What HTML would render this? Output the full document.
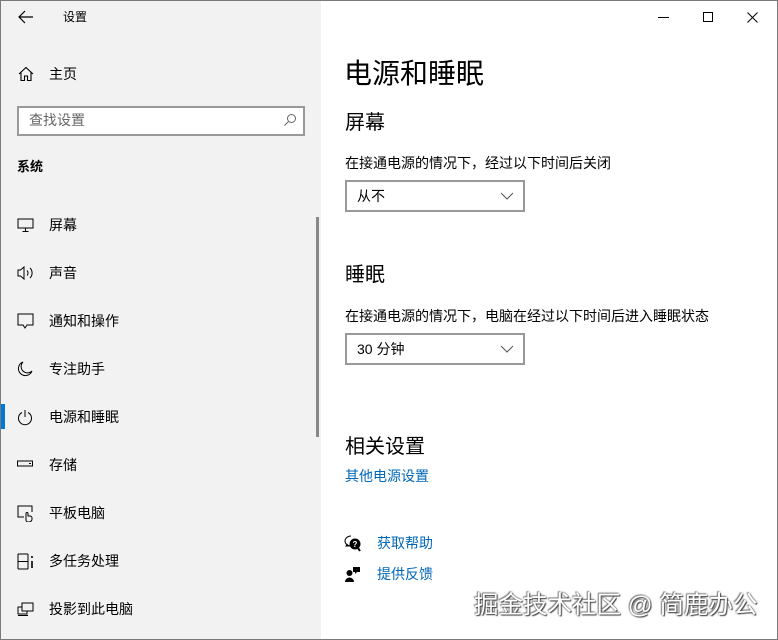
<!DOCTYPE html>
<html><head><meta charset="utf-8"><style>
*{margin:0;padding:0;box-sizing:border-box}
body{width:778px;height:640px;overflow:hidden;background:#fff;font-family:"Liberation Sans","Noto Sans CJK SC",sans-serif;color:#000;position:relative}
.win{position:absolute;left:0;top:0;width:778px;height:640px;border:1px solid #7a7a7a}
.left{position:absolute;left:1px;top:1px;width:320px;height:638px;background:#f2f2f2}
.t{position:absolute;white-space:nowrap;line-height:1}
.ic{position:absolute}
.nav{font-size:14px;left:49px}
.dd{position:absolute;left:345px;width:180px;height:32px;border:2px solid #999;font-size:14px;padding:7px 10px;line-height:1}
.dd svg{position:absolute;right:9px;top:10px}
.link{color:#0067b8;font-size:14px}
</style></head><body>
<div class="win"></div>
<div class="left">
</div>
<svg class="ic" style="left:18px;top:10px" width="16" height="14" viewBox="0 0 16 14"><path d="M7 1L1 7l6 6M1 7h14" stroke="#000" stroke-width="1.2" fill="none"/></svg>
<div class="t" style="left:63px;top:11px;font-size:12px">设置</div>
<svg class="ic" style="left:18px;top:66px" width="16" height="16" viewBox="0 0 16 16"><path d="M1 8L8 1.5 15 8M3 6.5V14.5h3.5V10h3v4.5H13V6.5" stroke="#000" stroke-width="1.1" fill="none"/></svg>
<div class="t nav" style="top:67px">主页</div>
<div style="position:absolute;left:17px;top:106px;width:288px;height:30px;border:2px solid #999;background:#fff"></div>
<div class="t" style="left:29px;top:113px;font-size:14px;color:#666">查找设置</div>
<svg class="ic" style="left:283px;top:113px" width="14" height="14" viewBox="0 0 14 14"><circle cx="8.5" cy="5.5" r="4" stroke="#666" fill="none"/><path d="M5.5 8.5L1.5 12.5" stroke="#666"/></svg>
<div class="t" style="left:17px;top:160px;font-size:13px;font-weight:bold">系统</div>
<svg class="ic" style="left:17px;top:218px" width="17" height="15" viewBox="0 0 17 15"><rect x="1" y="1" width="15" height="9" stroke="#000" fill="none"/><path d="M8.5 10v3M5.5 13.5h6" stroke="#000"/></svg>
<div class="t nav" style="top:218px">屏幕</div>
<svg class="ic" style="left:17px;top:265px" width="17" height="16" viewBox="0 0 17 16"><path d="M1 5h2.5L7 2v12L3.5 11H1z" stroke="#000" fill="none"/><path d="M10 5.5a3.5 3.5 0 0 1 0 5M13 3a7 7 0 0 1 0 10" stroke="#000" fill="none"/></svg>
<div class="t nav" style="top:266px">声音</div>
<svg class="ic" style="left:17px;top:313px" width="17" height="16" viewBox="0 0 17 16"><path d="M1 1h15v11H10l-2 3-2-3H1z" stroke="#000" fill="none"/></svg>
<div class="t nav" style="top:314px">通知和操作</div>
<svg class="ic" style="left:17px;top:361px" width="16" height="16" viewBox="0 0 16 16"><path d="M6 1a7 7 0 1 0 9 9A6 6 0 0 1 6 1z" stroke="#000" fill="none"/></svg>
<div class="t nav" style="top:362px">专注助手</div>
<div style="position:absolute;left:1px;top:404px;width:4px;height:25px;background:#0078d7"></div>
<svg class="ic" style="left:17px;top:409px" width="16" height="17" viewBox="0 0 16 17"><path d="M5 3.5A6.5 6.5 0 1 0 11 3.5M8 1v7" stroke="#000" fill="none"/></svg>
<div class="t nav" style="top:410px">电源和睡眠</div>
<svg class="ic" style="left:17px;top:460px" width="17" height="8" viewBox="0 0 17 8"><rect x="0.5" y="1" width="15" height="5" stroke="#000" fill="none"/><path d="M12 3.5h2" stroke="#000"/></svg>
<div class="t nav" style="top:458px">存储</div>
<svg class="ic" style="left:17px;top:505px" width="17" height="17" viewBox="0 0 17 17"><path d="M7 12H1V1h14v6" stroke="#000" fill="none"/><path d="M9 15V8.5a1 1 0 0 1 2 0V11h2a2 2 0 0 1 2 2v1a3 3 0 0 1-3 3h-1a2 2 0 0 1-2-2z" stroke="#000" fill="none"/></svg>
<div class="t nav" style="top:506px">平板电脑</div>
<svg class="ic" style="left:17px;top:553px" width="17" height="17" viewBox="0 0 17 17"><path d="M1 1v15M11 1v15M1 1h10M1 16h10M1 8.5h10" stroke="#000" fill="none"/><path d="M15 3v2M15 8v7" stroke="#000" stroke-width="1.6"/></svg>
<div class="t nav" style="top:554px">多任务处理</div>
<svg class="ic" style="left:17px;top:602px" width="17" height="15" viewBox="0 0 17 15"><rect x="5" y="1" width="11" height="8" stroke="#000" fill="none"/><path d="M5 5H1v7h9V9M1 13.5h10" stroke="#000" fill="none"/></svg>
<div class="t nav" style="top:602px">投影到此电脑</div>
<div style="position:absolute;left:316px;top:217px;width:3px;height:220px;background:#888"></div>

<div style="position:absolute;left:658px;top:17px;width:11px;height:1px;background:#000"></div>
<div style="position:absolute;left:703px;top:12px;width:10px;height:10px;border:1px solid #000"></div>
<svg class="ic" style="left:747px;top:12px" width="11" height="11" viewBox="0 0 11 11"><path d="M0.5 0.5l10 10M10.5 0.5l-10 10" stroke="#000"/></svg>

<div class="t" style="left:344px;top:60px;font-size:28px">电源和睡眠</div>
<div class="t" style="left:345px;top:113px;font-size:20px">屏幕</div>
<div class="t" style="left:345px;top:156px;font-size:14px">在接通电源的情况下，经过以下时间后关闭</div>
<div class="dd" style="top:180px">从不<svg width="14" height="8" viewBox="0 0 14 8"><path d="M1 1l6 6 6-6" stroke="#555" fill="none"/></svg></div>
<div class="t" style="left:345px;top:265px;font-size:20px">睡眠</div>
<div class="t" style="left:345px;top:309px;font-size:14px">在接通电源的情况下，电脑在经过以下时间后进入睡眠状态</div>
<div class="dd" style="top:333px">30 分钟<svg width="14" height="8" viewBox="0 0 14 8"><path d="M1 1l6 6 6-6" stroke="#555" fill="none"/></svg></div>
<div class="t" style="left:345px;top:437px;font-size:20px">相关设置</div>
<div class="t link" style="left:345px;top:469px">其他电源设置</div>
<svg class="ic" style="left:344px;top:535px" width="18" height="17" viewBox="0 0 18 17"><path d="M7 1a6 5 0 1 0 0 10H2l1.5-2" stroke="#000" fill="none"/><circle cx="11" cy="9" r="5.5" fill="#000"/><path d="M14 13l2 3" stroke="#000" stroke-width="2"/><text x="11" y="12" font-size="8" fill="#fff" text-anchor="middle" font-family="Liberation Sans" font-weight="bold">?</text></svg>
<div class="t link" style="left:377px;top:536px">获取帮助</div>
<svg class="ic" style="left:345px;top:566px" width="16" height="16" viewBox="0 0 16 16"><circle cx="4.5" cy="7" r="3" fill="#000"/><path d="M0 16a4.5 4.5 0 0 1 9 0z" fill="#000"/><path d="M8 1h7v5h-3l-2 2V6H8z" fill="#000"/></svg>
<div class="t link" style="left:377px;top:567px">提供反馈</div>
<div class="t" style="left:474px;top:594px;font-size:24.5px;color:#fff;text-shadow:1px 1px 1px #444,-1px -1px 1px #888,0 0 2px #555">掘金技术社区 @ 简鹿办公</div>
</body></html>
